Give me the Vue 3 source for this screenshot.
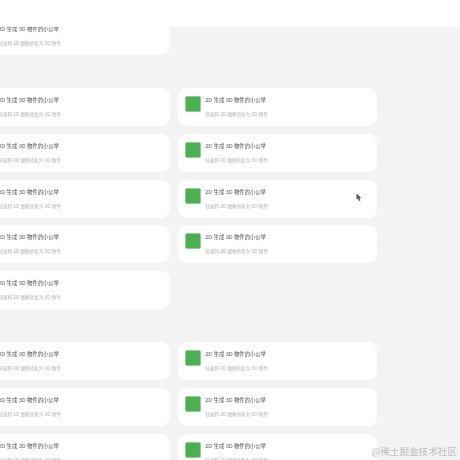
<script setup>
const sections = [
  { id: 'a', count: 1 },
  { id: 'b', count: 9 },
  { id: 'c', count: 6 }
];
</script>

<template>
  <div class="page">
    <div class="top-bar"></div>
    <section v-for="s in sections" :key="s.id" class="grid">
      <div v-for="n in s.count" :key="n" class="card">
        <div class="icon"></div>
        <div class="info">
          <div class="title">2D 生成 3D 物件的小公举</div>
          <div class="desc">快速将 2D 图像转化为 3D 物件</div>
        </div>
      </div>
    </section>
    <svg class="cursor" width="6" height="9" viewBox="0 0 6 9">
      <path d="M0.5 0.5 L0.5 6.5 L2 5.5 L3 8 L4.5 7.5 L3.5 5 L5.2 4.8 Z" fill="#555" />
    </svg>
    <div class="mark">@稀土掘金技术社区</div>
  </div>
</template>

<style scoped>
.page {
  position: relative;
  width: 460px;
  height: 460px;
  overflow: hidden;
  background: #f3f3f3;
  padding-top: 17px;
  box-sizing: border-box;
  font-family: "Noto Sans", "Noto Sans CJK SC", sans-serif;
}

.top-bar {
  position: absolute;
  top: 0;
  left: 0;
  right: 0;
  height: 27px;
  background: #fff;
  z-index: 2;
}

.grid {
  display: grid;
  grid-template-columns: 199px 199px;
  gap: 7.67px 8px;
  margin-left: -29px;
  margin-bottom: 33.33px;
}

.card {
  display: flex;
  gap: 4px;
  height: 38px;
  padding: 8px 7.3px;
  box-sizing: border-box;
  background: #fff;
  border-radius: 9px;
}

.icon {
  flex: none;
  width: 16px;
  height: 16px;
  background: #4caf50;
  border: 0.5px solid #8fd092;
  border-radius: 2px;
  box-sizing: border-box;
}

.info {
  display: flex;
  flex-direction: column;
}

.title {
  font-size: 5.33px;
  line-height: 8px;
  color: #555;
  white-space: nowrap;
  filter: blur(0.3px);
}

.desc {
  margin-top: 7px;
  font-size: 4.6px;
  line-height: 7px;
  color: #b0b0b0;
  white-space: nowrap;
  filter: blur(0.25px);
}

.cursor {
  position: absolute;
  left: 356px;
  top: 193px;
  z-index: 3;
  filter: blur(0.3px);
}

.mark {
  position: absolute;
  right: 3px;
  bottom: 2px;
  font-size: 9.6px;
  line-height: 14px;
  color: #bbb;
  font-family: "Noto Sans CJK SC", sans-serif;
  z-index: 3;
  filter: blur(0.3px);
}
</style>
